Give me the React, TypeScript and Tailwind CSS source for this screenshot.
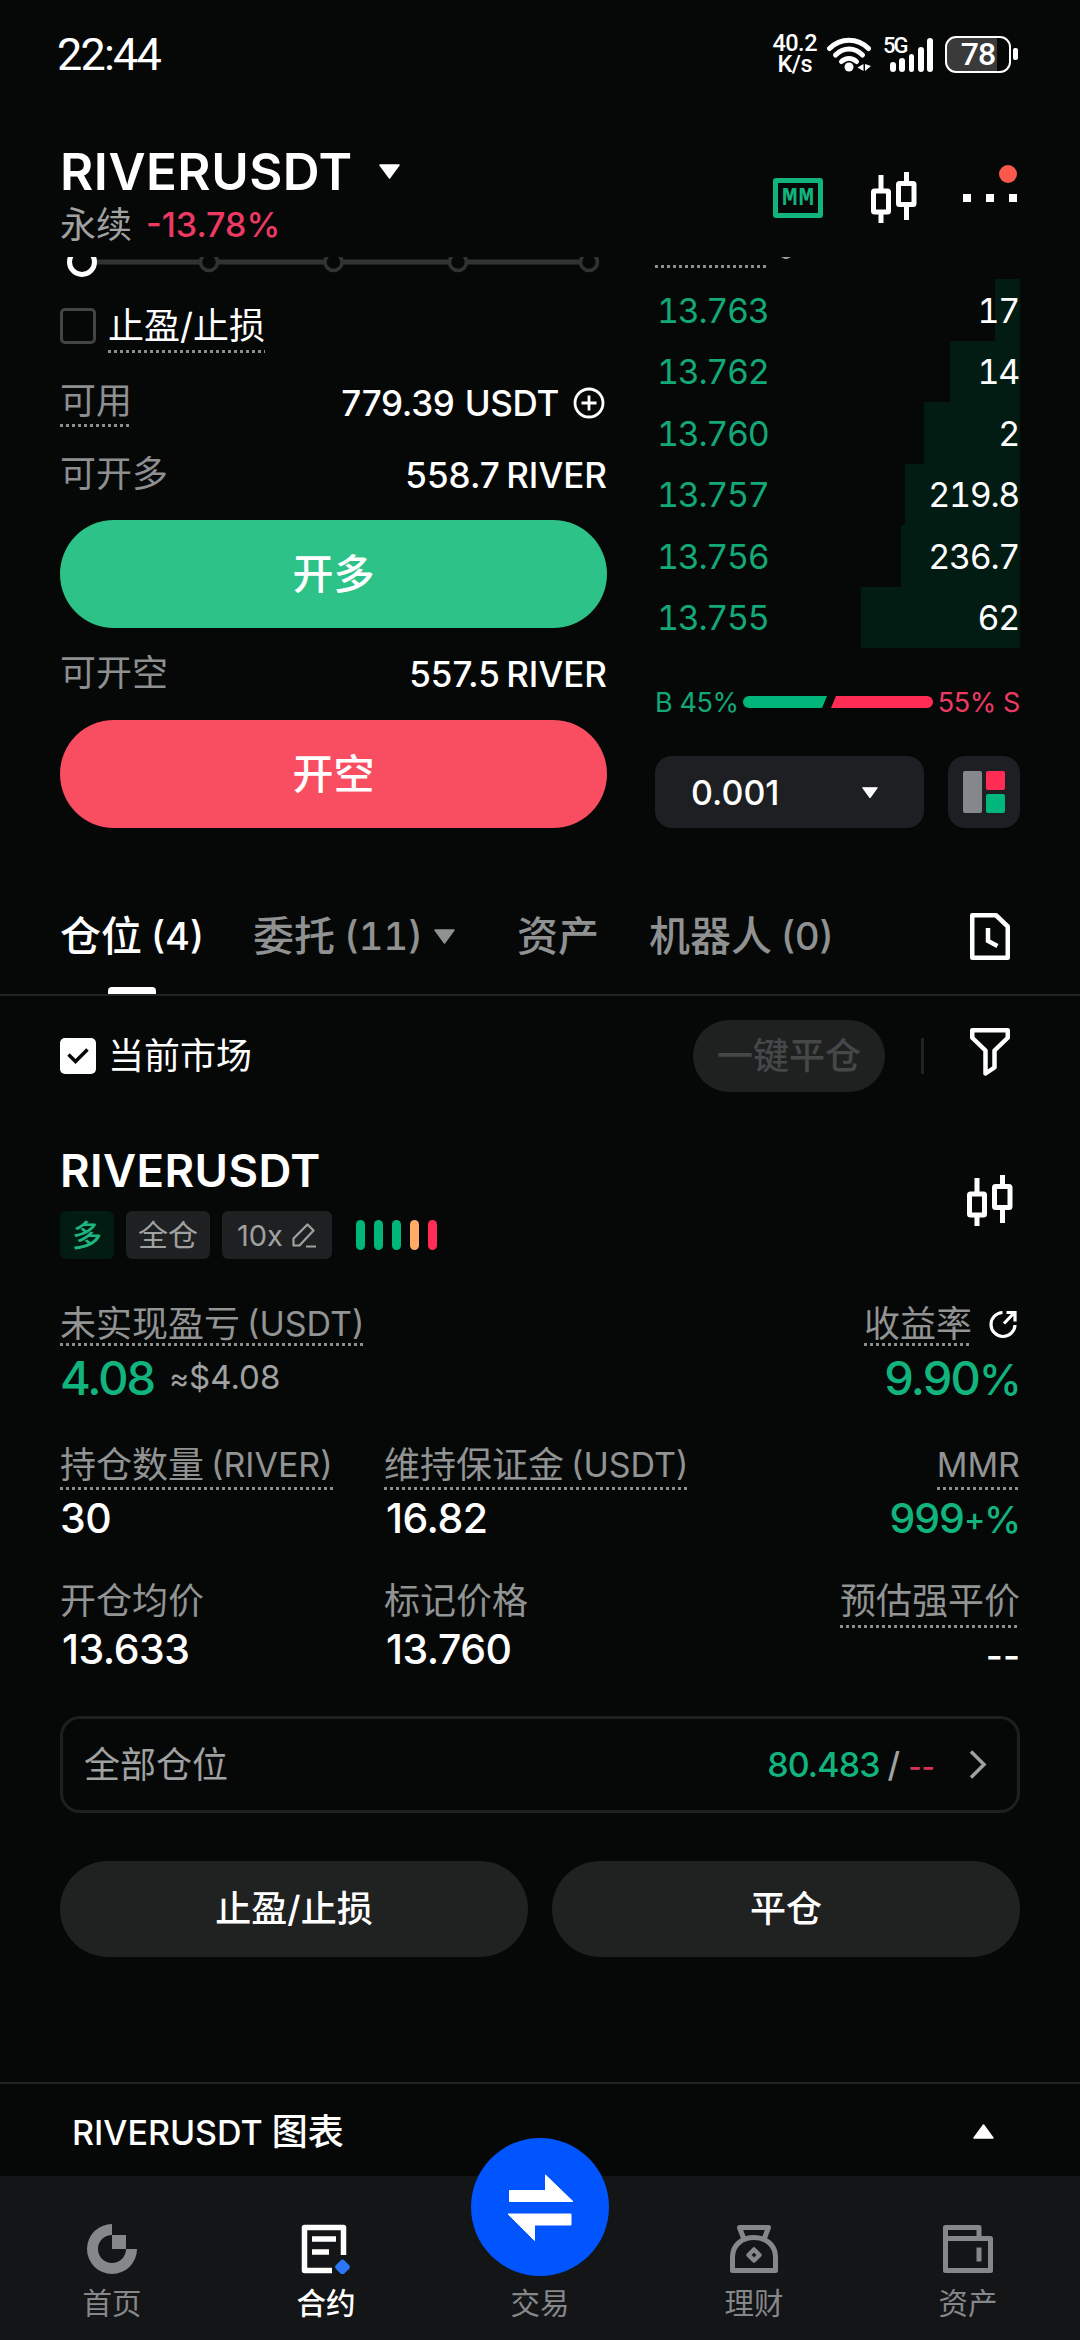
import React from "react"
import clsx from "clsx"

type Level = { price: string, amount: string, depth: number }

const levels: Level[] = [
  { price: "13.763", amount: "17", depth: 25 },
  { price: "13.762", amount: "14", depth: 70 },
  { price: "13.760", amount: "2", depth: 96 },
  { price: "13.757", amount: "219.8", depth: 115 },
  { price: "13.756", amount: "236.7", depth: 119 },
  { price: "13.755", amount: "62", depth: 159 },
]

const riskBars = ["bg-[#00b67a]", "bg-[#00b67a]", "bg-[#00b67a]", "bg-[#ffab66]", "bg-[#ff2d55]"]

function Caret({ up = false, className }: { up?: boolean, className?: string }) {
  return (
    <svg viewBox="0 0 21 15" className={clsx("shrink-0", up && "rotate-180", className)} fill="currentColor" stroke="currentColor" strokeWidth="1.5" strokeLinejoin="round">
      <path d="M1 1h19L10.5 14z" />
    </svg>
  )
}

function Candles() {
  return (
    <svg width="46" height="51" viewBox="0 0 46 51" fill="none" stroke="currentColor" strokeWidth="5">
      <rect x="2.5" y="19" width="15" height="21" rx="1" />
      <path d="M10 3v15M10 41v10M35.500 0v10M35.500 33v15" />
      <rect x="27.500" y="11.500" width="15.500" height="21" rx="1" />
    </svg>
  )
}

// label with the dotted hint line below it
function Hint({ children, className }: { children: React.ReactNode, className?: string }) {
  return (
    <span className={clsx("inline-flex items-center whitespace-pre bg-[repeating-linear-gradient(90deg,#8c8d8d_0_3px,transparent_3px_6px)] bg-[length:100%_3px] bg-bottom bg-no-repeat", className)}>
      {children}
    </span>
  )
}

function Latin({ children }: { children: React.ReactNode }) {
  return <span className="ml-[7px] text-[34px]">{children}</span>
}

function StatusBar() {
  return (
    <div className="flex h-[108px] items-center justify-between pl-[57px] pr-[62px] font-[Roboto,sans-serif]">
      <span className="text-[45px] tracking-[-1.800px]">22:44</span>
      <div className="flex items-center">
        <div className="mr-[10px] flex flex-col items-center text-[23.500px] leading-[21px] font-medium tracking-[-0.5px]">
          <span>40.2</span>
          <span>K/s</span>
        </div>
        <svg width="44" height="35" viewBox="0 0 44 35" fill="none" stroke="currentColor" strokeWidth="5" strokeLinecap="round">
          <path d="M2.500 11.500C13.500 .5 30.500 .5 41.500 11.500" />
          <path d="M8.500 18C16.500 10 27.500 10 35.500 18" />
          <path d="M14.500 24.500C19 20.500 25 20.500 29.500 24.500" />
          <circle cx="22" cy="30" r="4.500" fill="currentColor" stroke="none" />
          <path d="M36.500 27v7l-6-3.500zM38 27v7l6-5z" fill="currentColor" stroke="none" />
        </svg>
        <div className="relative ml-[19px] flex h-[35px] w-[43px] items-end gap-[3.500px]">
          <span className="absolute -left-[7px] top-0 text-[22px] leading-[18px] font-medium tracking-[-2px]">5G</span>
          <i className="h-[10px] w-[6px] rounded-full bg-white" />
          <i className="h-[14px] w-[6px] rounded-full bg-white" />
          <i className="h-[18px] w-[6px] rounded-full bg-white" />
          <i className="h-[25px] w-[6px] rounded-full bg-white" />
          <i className="h-[34px] w-[6px] rounded-full bg-white" />
        </div>
        <div className="ml-[12px] flex h-[37px] w-[66px] items-center justify-center rounded-[11px] border-[2.500px] border-white bg-[linear-gradient(90deg,#3a3a3a_80%,transparent_80%)] text-[32px] leading-none font-medium tracking-[-1px]">78</div>
        <i className="ml-[2px] h-[12px] w-[5px] rounded-[2px] bg-white" />
      </div>
    </div>
  )
}

function Header() {
  return (
    <div className="flex h-[149px] items-start justify-between pl-[60px] pr-[63px]">
      <div className="pt-[33px]">
        <div className="flex h-[60px] items-center text-[51px] font-semibold tracking-[0.500px]">
          RIVERUSDT
          <Caret className="ml-[26px] w-[21px]" />
        </div>
        <div className="flex h-[48px] items-center text-[36px] text-[#a0a1a1]">
          永续
          <span className="ml-[14px] text-[34px] font-medium text-[#ee3a62]">-13.78%</span>
        </div>
      </div>
      <div className="mt-[64px] flex h-[51px] items-center">
        <span className="flex h-[40px] w-[50px] items-center justify-center rounded-[3px] border-5 border-[#12b47e] pl-[1px] font-['Liberation_Mono',monospace] text-[26px] leading-none font-bold tracking-[1px] text-[#12b47e]">MM</span>
        <div className="ml-[48px]"><Candles /></div>
        <div className="relative ml-[46px] flex gap-[15px]">
          <i className="size-[8px] bg-white" />
          <i className="size-[8px] bg-white" />
          <i className="size-[8px] bg-white" />
          <i className="absolute -top-[29px] right-0 size-[18px] rounded-full bg-[#fb584c]" />
        </div>
      </div>
    </div>
  )
}

function LeverageSlider() {
  return (
    <svg width="547" height="20" viewBox="60 257 547 20" fill="none" className="block">
      <path d="M82 262H589" stroke="#313234" strokeWidth="5" />
      {[209, 333.5, 458, 589].map((x) => (
        <circle key={x} cx={x} cy="262" r="8.500" fill="#060808" stroke="#313234" strokeWidth="3.500" />
      ))}
      <circle cx="82" cy="262" r="12.500" fill="#060808" stroke="white" strokeWidth="5" />
    </svg>
  )
}

function AmountRow({ label, value, className }: { label: string, value: string, className?: string }) {
  return (
    <div className={clsx("flex items-center justify-between", className)}>
      <span className="mb-[3px] text-[36px] text-[#8e8f90]">{label}</span>
      <span className="text-[35px] font-medium [word-spacing:-3px]">{value}</span>
    </div>
  )
}

function OrderForm() {
  return (
    <div className="w-[547px]">
      <LeverageSlider />
      <div className="flex h-[98px] items-center gap-[12px]">
        <i className="size-[36px] rounded-[5px] border-3 border-[#434445]" />
        <Hint className="h-[53px] text-[36px]">止盈/止损</Hint>
      </div>
      <div className="flex h-[56px] items-center justify-between">
        <Hint className="mb-[4px] h-[51px] text-[36px] text-[#8e8f90]">可用</Hint>
        <span className="flex items-center text-[35px] font-medium [word-spacing:1px] tracking-[-0.300px]">
          779.39 USDT
          <svg width="32" height="32" viewBox="0 0 32 32" className="ml-[14px] mr-[2px]" fill="none" stroke="currentColor" strokeWidth="2.800">
            <circle cx="16" cy="16" r="14" />
            <path d="M16 8.500v15M8.500 16h15" />
          </svg>
        </span>
      </div>
      <AmountRow className="h-[89px]" label="可开多" value="558.7 RIVER" />
      <button className="block h-[108px] w-full rounded-full bg-[#2cc288] text-[41px] font-medium">开多</button>
      <AmountRow className="h-[92px]" label="可开空" value="557.5 RIVER" />
      <button className="block h-[108px] w-full rounded-full bg-[#f94d61] text-[41px] font-medium">开空</button>
    </div>
  )
}

function OrderBook() {
  return (
    <div className="w-[365px]">
      <div className="flex h-[22px] items-start">
        <Hint className="h-[11px] w-[112px]">{""}</Hint>
        <svg width="10" height="2" viewBox="0 0 10 2" className="ml-[14px]"><path d="M0 0h10L6 2H4z" fill="#a0a1a1" /></svg>
      </div>
      {levels.map((level) => (
        <div key={level.price} className="flex h-[61.500px] justify-end tracking-[-1.300px]">
          <span className="flex flex-1 items-center pl-[2px] pt-[2px] text-[34px] tabular-nums text-[#12a977]">{level.price}</span>
          <span className="flex items-center justify-end bg-[#021c14] pt-[2px] text-[34px] tabular-nums" style={{ width: level.depth }}>
            <span className="pr-[1px]">{level.amount}</span>
          </span>
        </div>
      ))}
      <div className="flex h-[108px] items-center justify-between text-[27px] tracking-[-0.400px]">
        <span className="text-[#12a977]">B 45%</span>
        <svg width="190" height="12" viewBox="0 0 190 12">
          <path d="M6 0H84L79 12H6A6 6 0 0 1 6 0z" fill="#00b67a" />
          <path d="M93 0H184a6 6 0 0 1 0 12H88z" fill="#ff2d55" />
        </svg>
        <span className="text-[#ee3a62]">55% S</span>
      </div>
      <div className="flex justify-between">
        <div className="flex h-[72px] w-[269px] items-center justify-between rounded-[17px] bg-[#1e1f22] pl-[36px] pr-[46px] pt-[1px] text-[34px] font-medium">
          0.001
          <Caret className="w-[16px]" />
        </div>
        <div className="flex size-[72px] items-center justify-center rounded-[17px] bg-[#1e1f22]">
          <svg width="42" height="42" viewBox="0 0 42 42">
            <rect width="19" height="42" rx="2" fill="#86878c" />
            <rect x="23" width="19" height="19" rx="2" fill="#ff2d55" />
            <rect x="23" y="23" width="19" height="19" rx="2" fill="#00b67a" />
          </svg>
        </div>
      </div>
    </div>
  )
}

function Tabs() {
  const tab = "flex h-[116px] items-center whitespace-pre text-[41px] font-medium"
  return (
    <div className="flex h-[168px] items-end border-b-2 border-[#212223] pl-[60px] pr-[70px] text-[#909191]">
      <div className={clsx(tab, "relative text-white")}>
        仓位<span className="ml-[9px] text-[38px]">(4)</span>
        <i className="absolute bottom-0 left-1/2 h-[7px] w-[48px] -translate-x-1/2 rounded-t-[4px] bg-white" />
      </div>
      <div className={clsx(tab, "ml-[49px]")}>
        委托<span className="ml-[9px] text-[38px] tabular-nums">(11)</span>
        <Caret className="ml-[11px] w-[21px]" />
      </div>
      <div className={clsx(tab, "ml-[62px]")}>资产</div>
      <div className={clsx(tab, "ml-[50px]")}>机器人<span className="ml-[9px] text-[38px]">(0)</span></div>
      <div className="ml-auto flex h-[116px] items-center text-white">
        <svg width="40" height="47" viewBox="0 0 40 47" fill="none" stroke="currentColor" strokeWidth="4.500" strokeLinejoin="round">
          <path d="M2.250 2.250H26L37.750 13.500V44.750H2.250z" />
          <path d="M18 15v13l9.500 5" strokeLinejoin="miter" />
        </svg>
      </div>
    </div>
  )
}

function FilterRow() {
  return (
    <div className="flex h-[120px] items-center pl-[60px] pr-[70px] text-[36px]">
      <i className="flex size-[36px] items-center justify-center rounded-[5px] bg-white">
        <svg width="22" height="16" viewBox="0 0 22 16" fill="none" stroke="#060808" strokeWidth="3.500"><path d="M1.500 6.500L8.500 13.500L20.500 1.500" /></svg>
      </i>
      <span className="ml-[12px]">当前市场</span>
      <span className="ml-auto flex h-[72px] w-[192px] items-center justify-center rounded-full bg-[#1f2121] font-medium text-[#454748]">一键平仓</span>
      <i className="ml-[36px] h-[36px] w-[3px] bg-[#202223]" />
      <svg width="40" height="48" viewBox="0 0 40 48" className="-mt-[9px] ml-[46px]" fill="none" stroke="currentColor" strokeWidth="4.500" strokeLinejoin="round">
        <path d="M2.250 2.250h35.500v7.500L24.500 22.500V39.500L15.500 45.500V22.500L2.250 9.750z" />
      </svg>
    </div>
  )
}

function Tag({ children, className }: { children: React.ReactNode, className?: string }) {
  return <span className={clsx("flex h-[48px] items-center justify-center rounded-[6px] text-[30px]", className)}>{children}</span>
}

function Position() {
  const value = "flex items-center text-[41px] font-medium tracking-[-0.500px]"
  return (
    <div className="px-[60px]">
      <div className="flex h-[143px] items-end justify-between">
        <div>
          <div className="flex h-[80px] items-center text-[45.500px] font-semibold tracking-[0.400px]">RIVERUSDT</div>
          <div className="flex items-center gap-[12px] text-[#a0a1a1]">
            <Tag className="w-[54px] bg-[#021c14] font-medium text-[#1eb580]">多</Tag>
            <Tag className="w-[84px] bg-[#1f2021]">全仓</Tag>
            <Tag className="w-[110px] gap-[9px] bg-[#1f2021]">
              <span className="text-[29px]">10x</span>
              <svg width="25" height="25" viewBox="0 0 25 25" fill="none" stroke="currentColor" strokeWidth="2.200" strokeLinejoin="round">
                <path d="M1.500 22.500V15.500L15.500 1.500L21.500 7.500L7.500 22.500zM14 23.500h10" />
              </svg>
            </Tag>
            <div className="ml-[12px] flex gap-[9px]">
              {riskBars.map((color, i) => <i key={i} className={clsx("h-[30px] w-[9px] rounded-full", color)} />)}
            </div>
          </div>
        </div>
        <div className="pb-[33px] pr-[7px]"><Candles /></div>
      </div>

      <div className="mt-[42px] flex justify-between text-[36px] text-[#929393]">
        <div>
          <Hint className="flex h-[45px] w-[303px]">未实现盈亏<Latin>(USDT)</Latin></Hint>
          <div className="flex h-[62px] items-center">
            <span className="text-[47px] font-medium tracking-[-2px] text-[#12b47e]">4.08</span>
            <span className="ml-[15px] text-[33px] text-[#a0a1a1]"><span className="text-[30px]">≈</span>$4.08</span>
          </div>
        </div>
        <div className="flex flex-col items-end">
          <div className="flex items-center">
            <Hint className="h-[45px]">收益率</Hint>
            <svg width="30" height="30" viewBox="0 0 30 30" className="ml-[16px] mr-[2px] text-white" fill="none" stroke="currentColor" strokeWidth="3.200">
              <path d="M14.500 3.500A12 12 0 1 0 27 16" />
              <path d="M16 14.500L26 4M18.500 3.500h8.500v9" />
            </svg>
          </div>
          <div className="flex h-[62px] items-center text-[47px] font-medium tracking-[-1.800px] text-[#12b47e]">
            <span>9.90<span className="text-[43px]">%</span></span>
          </div>
        </div>
      </div>

      <div className="mt-[31px] flex text-[36px] text-[#929393]">
        <div className="w-[324px]">
          <Hint className="flex h-[51px] w-[273px]">持仓数量<Latin>(RIVER)</Latin></Hint>
          <div className={clsx(value, "h-[57px] text-white")}>30</div>
        </div>
        <div className="flex-1">
          <Hint className="flex h-[51px] w-[303px]">维持保证金<Latin>(USDT)</Latin></Hint>
          <div className={clsx(value, "h-[57px] pl-[2px] text-white")}>16.82</div>
        </div>
        <div className="flex flex-col items-end">
          <Hint className="h-[51px] text-[34px]">MMR</Hint>
          <div className="flex h-[57px] items-center text-[41px] font-medium tracking-[-1px] text-[#12b47e]">
            <span>999<span className="align-[2px] text-[32px]">+</span><span className="text-[37px]">%</span></span>
          </div>
        </div>
      </div>

      <div className="mt-[26px] flex text-[36px] text-[#929393]">
        <div className="w-[324px]">
          <div className="flex h-[55px] items-center">开仓均价</div>
          <div className={clsx(value, "h-[42px] pl-[2px] text-white")}>13.633</div>
        </div>
        <div className="flex-1">
          <div className="flex h-[55px] items-center">标记价格</div>
          <div className={clsx(value, "h-[42px] pl-[2px] text-white")}>13.760</div>
        </div>
        <div className="flex flex-col items-end">
          <Hint className="h-[55px]">预估强平价</Hint>
          <div className="flex h-[42px] items-center pt-[13px] text-[37px] font-medium text-white">--</div>
        </div>
      </div>

      <div className="mt-[46px] flex h-[97px] items-center rounded-[20px] border-3 border-[#1d1f20] pl-[21px] pr-[30px] text-[#a0a1a1]">
        <span className="text-[36px]">全部仓位</span>
        <span className="ml-auto text-[34px] font-medium whitespace-pre">
          <span className="tracking-[-0.900px] text-[#12b47e]">80.483</span><span className="ml-[8px] mr-[7px]">/</span><span className="ml-[1px] text-[29px] text-[#d93258]">--</span>
        </span>
        <svg width="18" height="29" viewBox="0 0 18 29" className="ml-[34px]" fill="none" stroke="currentColor" strokeWidth="3.500"><path d="M2 1.500L15 14.500L2 27.500" /></svg>
      </div>

      <div className="mt-[48px] flex gap-[24px] text-[36px] font-medium">
        <button className="h-[96px] flex-1 rounded-full bg-[#202121]">止盈/止损</button>
        <button className="h-[96px] flex-1 rounded-full bg-[#202121]">平仓</button>
      </div>
    </div>
  )
}

function NavItem({ label, active = false, children }: { label: string, active?: boolean, children?: React.ReactNode }) {
  return (
    <div className={clsx("flex flex-1 flex-col items-center pt-[48px]", active ? "font-medium text-white" : "text-[#86878a]")}>
      <div className="flex h-[50px] items-center">{children}</div>
      <span className="mt-[15px] text-[29.500px]">{label}</span>
    </div>
  )
}

function BottomNav() {
  return (
    <div className="relative flex h-[164px] bg-[#141517] px-[5px]">
      <NavItem label="首页">
        <svg width="50" height="50" viewBox="0 0 50 50" fill="currentColor">
          <path d="M25 0A25 25 0 1 0 50 25H39A14 14 0 1 1 25 11z" />
          <path d="M25 11h14v14H25z" />
        </svg>
      </NavItem>
      <NavItem label="合约" active>
        <svg width="50" height="50" viewBox="0 0 50 50" fill="none" stroke="currentColor" strokeWidth="5.500" strokeLinejoin="round">
          <path d="M42.500 31V3.500H3.500V46.500H31" />
          <path d="M11 15h24M11 28h17" />
          <path d="M41.500 38.500l4.500 4.500l-4.500 4.500l-4.500-4.500z" stroke="#2b77f5" fill="#2b77f5" />
        </svg>
      </NavItem>
      <NavItem label="交易" />
      <NavItem label="理财">
        <svg width="48" height="48" viewBox="0 0 48 48" fill="none" stroke="currentColor" strokeWidth="5" strokeLinejoin="round">
          <path d="M13.500 13L9.500 2.500H38.500L34.500 13" />
          <path d="M2.500 45.500V32C2.500 20 12 12.500 24 12.500S45.500 20 45.500 32V45.500z" />
          <path d="M24 24.500L29.500 30L24 35.500L18.500 30z" strokeWidth="4.500" />
        </svg>
      </NavItem>
      <NavItem label="资产">
        <svg width="50" height="48" viewBox="0 0 50 48" fill="none" stroke="currentColor" strokeWidth="5" strokeLinejoin="round">
          <path d="M2.500 13.500V2.500H36V13.500M2.500 13.500H47.500V45.500H2.500z" />
          <path d="M36 22.500v14" />
        </svg>
      </NavItem>
      <div className="absolute -top-[38px] left-1/2 size-[138px] -translate-x-1/2 rounded-full bg-[#0055ff]">
        <svg width="138" height="138" viewBox="0 0 138 138" fill="white" stroke="white" strokeWidth="1" strokeLinejoin="round">
          <path d="M38.500 52.500H74.500V37L102 63.500H38.500z" />
          <path d="M100 76V87H63.500V102.500L37 76z" />
        </svg>
      </div>
    </div>
  )
}

export default function App() {
  return (
    <div className="flex h-[2340px] w-[1080px] flex-col overflow-hidden bg-[#060808] font-['Inter','Noto_Sans_CJK_SC',sans-serif] leading-none text-white">
      <StatusBar />
      <Header />
      <div className="flex justify-between px-[60px]">
        <OrderForm />
        <OrderBook />
      </div>
      <Tabs />
      <FilterRow />
      <Position />
      <div className="mt-auto flex h-[94px] items-center justify-between border-t-2 border-[#212223] pl-[72px] pr-[86px] pt-[3px] text-[34px] font-medium">
        <span>RIVERUSDT<span className="ml-[9px] text-[36px]">图表</span></span>
        <Caret up className="w-[21px]" />
      </div>
      <BottomNav />
    </div>
  )
}
